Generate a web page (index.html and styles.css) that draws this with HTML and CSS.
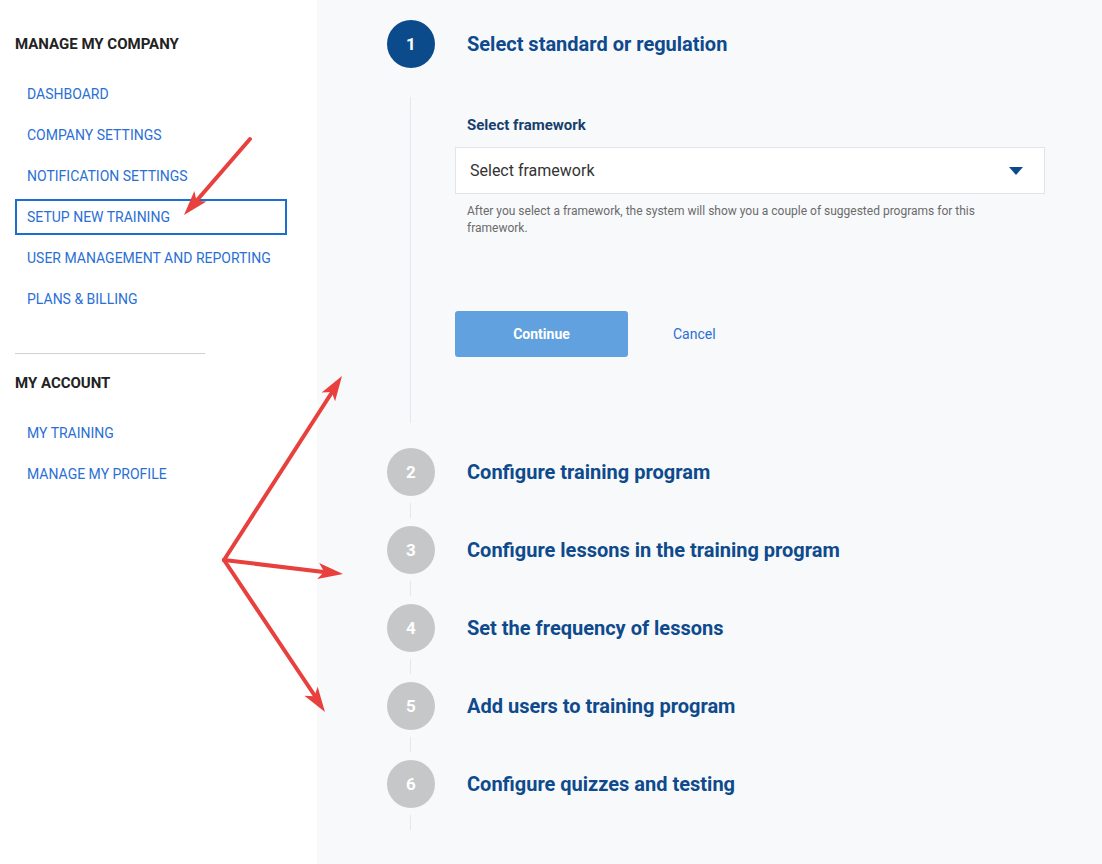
FILE: index.html
```html
<!DOCTYPE html>
<html lang="en">
<head>
  <meta charset="UTF-8">
  <title>Setup new training</title>
  <link rel="stylesheet" href="styles.css">
</head>
<body>
  <div id="page">
    <div id="sidebar">
      <h3 class="side-title">MANAGE MY COMPANY</h3>
      <ul class="side-nav">
        <li><a href="#">DASHBOARD</a></li>
        <li><a href="#">COMPANY SETTINGS</a></li>
        <li><a href="#">NOTIFICATION SETTINGS</a></li>
        <li class="active"><a href="#">SETUP NEW TRAINING</a></li>
        <li><a href="#">USER MANAGEMENT AND REPORTING</a></li>
        <li><a href="#">PLANS &amp; BILLING</a></li>
      </ul>
      <hr class="side-sep">
      <h3 class="side-title">MY ACCOUNT</h3>
      <ul class="side-nav">
        <li><a href="#">MY TRAINING</a></li>
        <li><a href="#">MANAGE MY PROFILE</a></li>
      </ul>
    </div>
    <div id="main">
      <div class="step current">
        <div class="step-head">
          <span class="num">1</span>
          <h2>Select standard or regulation</h2>
        </div>
        <div class="step-body">
          <label class="field-label">Select framework</label>
          <div class="select">
            <span>Select framework</span>
            <svg width="14" height="8" viewBox="0 0 14 8"><path d="M0 0h14L7 8z" fill="#0d4a8c"/></svg>
          </div>
          <p class="help">After you select a framework, the system will show you a couple of suggested programs for this framework.</p>
          <div class="actions">
            <button class="btn">Continue</button>
            <a href="#" class="cancel">Cancel</a>
          </div>
        </div>
      </div>
      <div class="step">
        <div class="step-head"><span class="num">2</span><h2>Configure training program</h2></div>
        <div class="link"></div>
      </div>
      <div class="step">
        <div class="step-head"><span class="num">3</span><h2>Configure lessons in the training program</h2></div>
        <div class="link"></div>
      </div>
      <div class="step">
        <div class="step-head"><span class="num">4</span><h2>Set the frequency of lessons</h2></div>
        <div class="link"></div>
      </div>
      <div class="step">
        <div class="step-head"><span class="num">5</span><h2>Add users to training program</h2></div>
        <div class="link"></div>
      </div>
      <div class="step">
        <div class="step-head"><span class="num">6</span><h2>Configure quizzes and testing</h2></div>
        <div class="link"></div>
      </div>
    </div>
    <svg class="arrows" width="1102" height="864" viewBox="0 0 1102 864">
      <g fill="#e8403d">
        <line x1="250" y1="139" x2="192" y2="206" stroke="#e8403d" stroke-width="4" stroke-linecap="round"/>
        <path d="M0 0L-25 -8L-19 0L-25 8z" transform="translate(184 215) rotate(131)"/>
        <line x1="224" y1="560" x2="336" y2="386" stroke="#e8403d" stroke-width="4" stroke-linecap="round"/>
        <path d="M0 0L-25 -8L-19 0L-25 8z" transform="translate(342 376) rotate(-57)"/>
        <line x1="224" y1="560" x2="332" y2="573" stroke="#e8403d" stroke-width="4" stroke-linecap="round"/>
        <path d="M0 0L-25 -8L-19 0L-25 8z" transform="translate(343 574) rotate(7)"/>
        <line x1="224" y1="560" x2="319" y2="702" stroke="#e8403d" stroke-width="4" stroke-linecap="round"/>
        <path d="M0 0L-25 -8L-19 0L-25 8z" transform="translate(325 712) rotate(56)"/>
      </g>
    </svg>
  </div>
</body>
</html>
```
FILE: styles.css
```css
* {
  padding: 0;
  margin: 0;
  box-sizing: border-box;
}
body {
  font-family: Roboto, "Liberation Sans", sans-serif;
  background: #f8f9fb;
}
#page {
  position: relative;
  display: flex;
  min-height: 864px;
}
#sidebar {
  width: 317px;
  background: #fff;
  padding: 35px 0 0 15px;
}
.side-title {
  font-size: 15px;
  font-weight: 700;
  color: #222;
  line-height: 18px;
}
.side-nav {
  list-style: none;
  margin-top: 23px;
}
.side-nav li {
  width: 272px;
  height: 36px;
  margin-bottom: 5px;
  border: 2px solid transparent;
  display: flex;
  align-items: center;
  padding-left: 10px;
}
.side-nav li.active {
  border-color: #1b6fcf;
}
.side-nav a {
  font-size: 14px;
  color: #2a6fd4;
  text-decoration: none;
}
.side-sep {
  width: 190px;
  border: 0;
  border-top: 1px solid #cfcfd6;
  margin: 36px 0 20px;
}
#main {
  flex: 1;
  padding: 20px 0 0 70px;
}
.step-head {
  display: flex;
  align-items: center;
  height: 48px;
  gap: 32px;
}
.num {
  width: 48px;
  height: 48px;
  border-radius: 50%;
  background: #c6c7c9;
  color: #fff;
  font-weight: 700;
  font-size: 17px;
  display: flex;
  align-items: center;
  justify-content: center;
  flex: none;
}
.current .num {
  background: #0b4a8b;
}
.step-head h2 {
  font-size: 20px;
  font-weight: 700;
  color: #0e4a8c;
}
.step-body {
  margin: 29px 0 25px 23px;
  border-left: 1px solid #e6e7ea;
  padding: 19px 0 65px 44px;
  height: 326px;
}
.field-label {
  display: block;
  padding-left: 12px;
  font-size: 15px;
  font-weight: 700;
  color: #173f6e;
  line-height: 18px;
}
.select {
  margin-top: 13px;
  width: 590px;
  height: 47px;
  background: #fff;
  border: 1px solid #e3e4e7;
  display: flex;
  align-items: center;
  justify-content: space-between;
  padding: 0 21px 0 14px;
  font-size: 16px;
  color: #333;
}
.help {
  padding-left: 12px;
  margin-top: 9px;
  width: 560px;
  font-size: 12px;
  line-height: 17px;
  color: #6b6b6b;
}
.actions {
  margin-top: 74px;
  display: flex;
  align-items: center;
  gap: 45px;
}
.btn {
  width: 173px;
  height: 46px;
  border: 0;
  border-radius: 3px;
  background: #62a1e0;
  color: #fff;
  font-family: inherit;
  font-size: 14px;
  font-weight: 700;
}
.cancel {
  font-size: 14px;
  color: #2a6fd4;
  text-decoration: none;
}
.link {
  width: 1px;
  height: 15px;
  margin: 7px 0 8px 23px;
  background: #e6e7ea;
}
.arrows {
  position: absolute;
  left: 0;
  top: 0;
  pointer-events: none;
}
```
